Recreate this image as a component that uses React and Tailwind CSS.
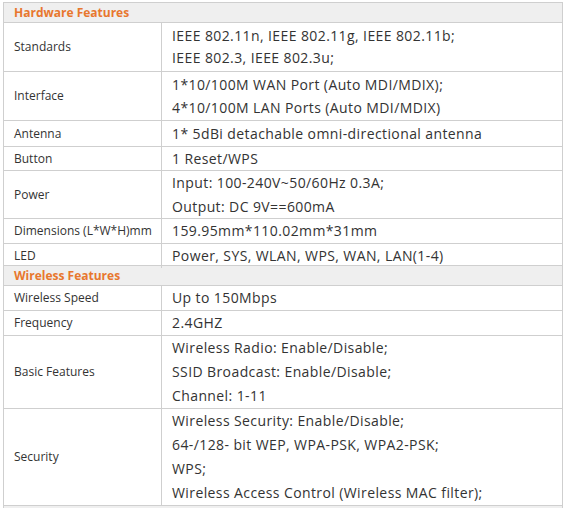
import React from "react";

const sections = [
  {
    title: "Hardware Features",
    rows: [
      { label: "Standards", h: "h-[49px]", lead: "leading-[22px]", lines: ["IEEE 802.11n, IEEE 802.11g, IEEE 802.11b;", "IEEE 802.3, IEEE 802.3u;"] },
      { label: "Interface", h: "h-[49px]", lead: "leading-[23px]", lines: ["1*10/100M WAN Port (Auto MDI/MDIX);", "4*10/100M LAN Ports (Auto MDI/MDIX)"] },
      { label: "Antenna", h: "h-[26px]", lines: ["1* 5dBi detachable omni-directional antenna"] },
      { label: "Button", h: "h-[24px]", lines: ["1 Reset/WPS"] },
      { label: "Power", h: "h-[48px]", lines: ["Input: 100-240V~50/60Hz 0.3A;", "Output: DC 9V==600mA"] },
      { label: "Dimensions (L*W*H)mm", h: "h-[25px]", lines: ["159.95mm*110.02mm*31mm"] },
      { label: "LED", h: "h-[22px]", lines: ["Power, SYS, WLAN, WPS, WAN, LAN(1-4)"] },
    ],
  },
  {
    title: "Wireless Features",
    rows: [
      { label: "Wireless Speed", h: "h-[25px]", lines: ["Up to 150Mbps"] },
      { label: "Frequency", h: "h-[25px]", lines: ["2.4GHZ"] },
      { label: "Basic Features", h: "h-[73px]", lines: ["Wireless Radio: Enable/Disable;", "SSID Broadcast: Enable/Disable;", "Channel: 1-11"] },
      {
        label: "Security",
        h: "h-[97px]",
        lines: [
          "Wireless Security: Enable/Disable;",
          "64-/128- bit WEP, WPA-PSK, WPA2-PSK;",
          "WPS;",
          "Wireless Access Control (Wireless MAC filter);",
        ],
      },
    ],
  },
  { title: "", rows: [] },
];

function SectionHeader({ title }) {
  return (
    <div className="h-[20px] bg-[#efefef] border-b border-[#cfcfcf] px-[10px] flex items-center text-[12px] font-bold text-[#e8772e] whitespace-nowrap">
      {title}
    </div>
  );
}

function SpecRow({ row }) {
  return (
    <div className={`grid grid-cols-[158px_1fr] border-b border-[#cfcfcf] ${row.h}`}>
      <div className="border-r border-[#cfcfcf] px-[10px] flex items-center text-[12px] text-[#333] whitespace-nowrap">
        {row.label}
      </div>
      <div className={`px-[10px] flex flex-col justify-center text-[14px] tracking-[0.4px] text-[#333] ${row.lead || "leading-[24px]"}`}>
        {row.lines.map((line) => (
          <div key={line} className="whitespace-nowrap">{line}</div>
        ))}
      </div>
    </div>
  );
}

export default function App() {
  return (
    <div className="w-[565px] h-[508px] overflow-hidden bg-white" style={{ fontFamily: '"Open Sans", "DejaVu Sans", sans-serif' }}>
      <div className="ml-[3px] mt-[2px] w-[560px] border border-[#cfcfcf] border-b-0">
        {sections.map((s, i) => (
          <div key={i}>
            <SectionHeader title={s.title} />
            {s.rows.map((r) => (
              <SpecRow key={r.label} row={r} />
            ))}
          </div>
        ))}
      </div>
    </div>
  );
}
